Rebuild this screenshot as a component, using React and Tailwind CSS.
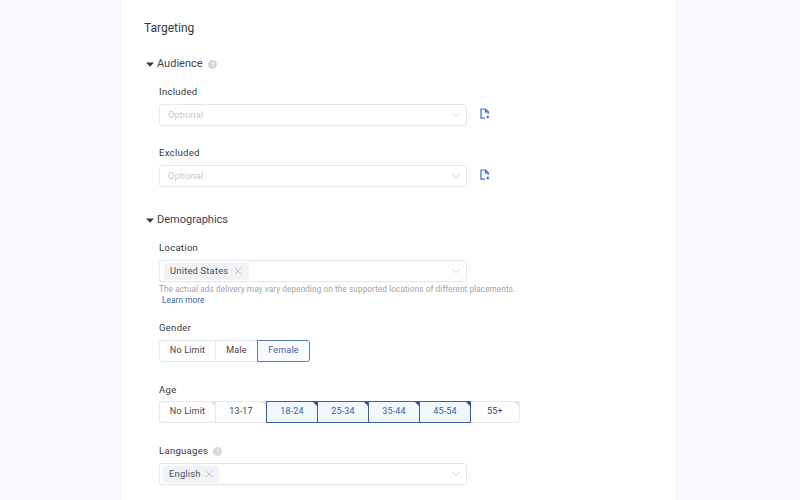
import { ChevronDown, X } from 'lucide-react';

const Caret = () => (
  <svg width="8" height="5" viewBox="0 0 8 5" className="mr-[3px] shrink-0">
    <path d="M0 0.5h8L4 4.8z" fill="#33383f" />
  </svg>
);

const Help = () => (
  <svg width="9" height="9" viewBox="0 0 9 9" className="shrink-0">
    <circle cx="4.5" cy="4.5" r="4.5" fill="#d3d6dc" />
    <path d="M3.2 3.6a1.3 1.2 0 1 1 1.9 1.1c-.4.2-.6.4-.6.8" stroke="#fff" strokeWidth="0.8" fill="none" />
    <circle cx="4.5" cy="6.8" r="0.5" fill="#fff" />
  </svg>
);

const FileAdd = () => (
  <svg width="10" height="12" viewBox="0 0 10 12" fill="none" stroke="#3f68d8" strokeWidth="1.2" className="shrink-0">
    <path d="M5 10.2H1V1h4.4l2.8 2.6V6" />
    <path d="M5.4 1v2.8h2.8" />
    <path d="M7.8 7.4v3.2M6.2 9h3.2" />
  </svg>
);

const Select = ({ children, placeholder, icon }) => (
  <div className="flex items-center">
    <div className="w-[308px] h-[22px] flex items-center border border-[#e6e8ec] rounded-[3px] bg-white pr-[3px] shadow-[0_1px_1px_rgba(0,0,0,0.02)]">
      <div className="flex-1 flex items-center">
        {placeholder ? <span className="pl-[8px] pt-[2px] text-[9px] tracking-[0.2px] text-[#c4c7cd]">{placeholder}</span> : children}
      </div>
      <ChevronDown size={14} strokeWidth={1.3} className="text-[#c2c5ca]" />
    </div>
    {icon && <div className="ml-[13px] -mt-[3px]"><FileAdd /></div>}
  </div>
);

const Tag = ({ label, wide }) => (
  <div className={`h-[17px] flex items-center rounded-[2px] bg-[#f0f2f6] text-[9.4px] tracking-[0.2px] text-[#4a4f57] ${wide ? 'ml-[4px] pl-[6px]' : 'ml-[3px] pl-[6px]'}`}>
    {label}
    <X size={12} strokeWidth={0.9} className={`text-[#8a8e95] ${wide ? 'ml-[4px] mr-[5px]' : 'ml-[2px] mr-[4px]'}`} />
  </div>
);

const Label = ({ children }) => (
  <div className="text-[9.5px] leading-[14px] text-[#33383f] tracking-[0.3px]">{children}</div>
);

const Heading = ({ children }) => (
  <div className="flex items-center text-[11px] leading-[16px] text-[#3f444b]">
    <Caret />
    <span>{children}</span>
  </div>
);

const Segment = ({ label, active, corner, w, tone }) => (
  <div
    className={`relative h-[22px] flex items-center justify-center text-[9px] tracking-[0.2px] -ml-px first:ml-0 first:rounded-l-[3px] last:rounded-r-[3px] ${w} ${
      active
        ? tone === 'soft'
          ? 'z-10 bg-[#f8fbff] border border-[#5a7cc0] text-[#3c5fa0]'
          : 'z-10 bg-[#f0f7fd] border border-[#3c5fa0] text-[#3c5fa0]'
        : 'bg-white border border-[#e6e8ec] text-[#3f444b]'
    }`}
  >
    {label}
    {corner && (
      <span
        className={`absolute top-0 right-0 w-0 h-0 border-l-[4px] border-l-transparent border-t-[4px] ${
          active ? 'border-t-[#2f4f8f]' : 'border-t-[#dcdee3]'
        }`}
      />
    )}
  </div>
);

export default function App() {
  return (
    <div className="w-[800px] h-[500px] overflow-hidden bg-[#f8f9fc] font-['Roboto','Liberation_Sans',sans-serif]">
      <div className="ml-[123px] w-[552px] h-[500px] bg-white pl-[21px] pt-[20px]">
        <div className="text-[12px] leading-[17px] text-[#33383f]">Targeting</div>

        <div className="ml-[2px] mt-[19px]">
          <div className="flex items-center">
            <Heading>Audience</Heading>
            <div className="ml-[5px]"><Help /></div>
          </div>
        </div>

        <div className="ml-[15px] mt-[13px]">
          <Label>Included</Label>
          <div className="mt-[5px]"><Select placeholder="Optional" icon /></div>
          <div className="mt-[20px]"><Label>Excluded</Label></div>
          <div className="mt-[5px]"><Select placeholder="Optional" icon /></div>
        </div>

        <div className="ml-[2px] mt-[25px]"><Heading>Demographics</Heading></div>

        <div className="ml-[15px] mt-[13px]">
          <Label>Location</Label>
          <div className="mt-[5px]"><Select><Tag label="United States" wide /></Select></div>
          <div className="mt-[2px] text-[8.2px] leading-[11px] text-[#a0a3a9] tracking-[0.1px] whitespace-nowrap">
            The actual ads delivery may vary depending on the supported locations of different placements.
          </div>
          <div className="ml-[3px] text-[8.2px] leading-[11px] text-[#3c5fa0] tracking-[0.1px]">Learn more</div>

          <div className="mt-[15px]"><Label>Gender</Label></div>
          <div className="mt-[5px] flex">
            <Segment label="No Limit" w="w-[57px]" />
            <Segment label="Male" w="w-[43px]" />
            <Segment label="Female" active tone="soft" w="w-[53px]" />
          </div>

          <div className="mt-[21px]"><Label>Age</Label></div>
          <div className="mt-[4px] flex">
            <Segment label="No Limit" corner w="w-[57px]" />
            <Segment label="13-17" corner w="w-[52px]" />
            <Segment label="18-24" active corner w="w-[52px]" />
            <Segment label="25-34" active corner w="w-[52px]" />
            <Segment label="35-44" active corner w="w-[52px]" />
            <Segment label="45-54" active corner w="w-[52px]" />
            <Segment label="55+" corner w="w-[50px]" />
          </div>

          <div className="mt-[21px] flex items-center gap-[5px]">
            <Label>Languages</Label>
            <Help />
          </div>
          <div className="mt-[5px]"><Select><Tag label="English" /></Select></div>
        </div>
      </div>
    </div>
  );
}
